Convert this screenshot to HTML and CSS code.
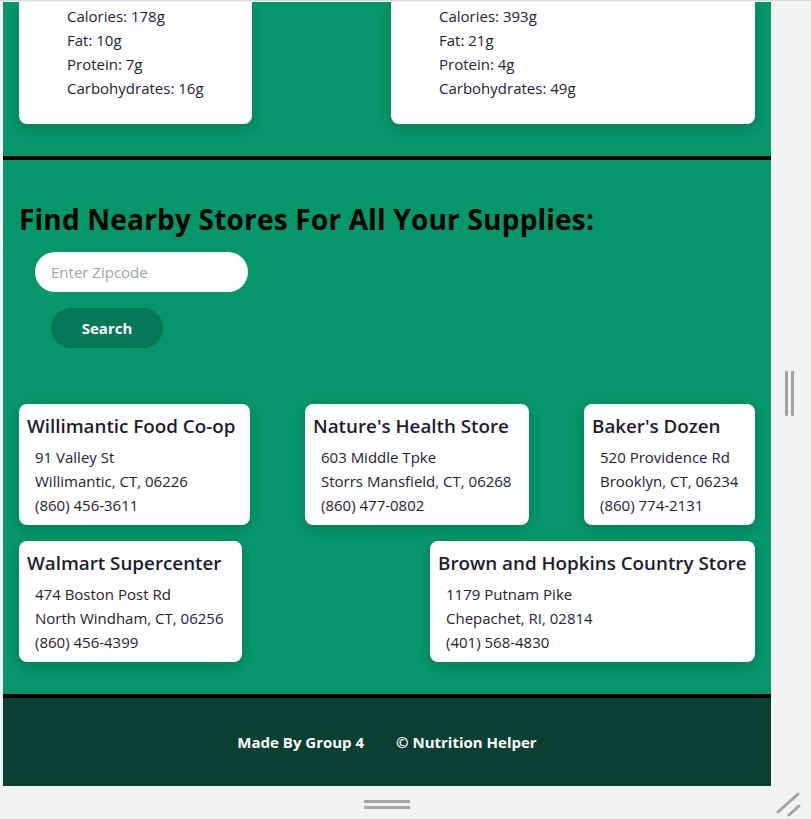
FILE: index.html
```html
<!DOCTYPE html>
<html lang="en">
<head>
<meta charset="utf-8">
<title>Nutrition Helper</title>
<link rel="stylesheet" href="styles.css">
</head>
<body>
<div class="window">
  <div class="viewport">
    <section class="foods">
      <div class="food-card food-card--a">
        <ul class="facts">
          <li>Calories: 178g</li>
          <li>Fat: 10g</li>
          <li>Protein: 7g</li>
          <li>Carbohydrates: 16g</li>
        </ul>
      </div>
      <div class="food-card food-card--b">
        <ul class="facts">
          <li>Calories: 393g</li>
          <li>Fat: 21g</li>
          <li>Protein: 4g</li>
          <li>Carbohydrates: 49g</li>
        </ul>
      </div>
    </section>

    <section class="stores">
      <h2 class="stores-title">Find Nearby Stores For All Your Supplies:</h2>
      <input class="zip" type="text" placeholder="Enter Zipcode">
      <button class="search-btn">Search</button>

      <div class="store-list">
        <div class="store store--1">
          <h3 class="store-name">Willimantic Food Co-op</h3>
          <p class="store-line">91 Valley St</p>
          <p class="store-line">Willimantic, CT, 06226</p>
          <p class="store-line">(860) 456-3611</p>
        </div>
        <div class="store store--2">
          <h3 class="store-name">Nature's Health Store</h3>
          <p class="store-line">603 Middle Tpke</p>
          <p class="store-line">Storrs Mansfield, CT, 06268</p>
          <p class="store-line">(860) 477-0802</p>
        </div>
        <div class="store store--3">
          <h3 class="store-name">Baker's Dozen</h3>
          <p class="store-line">520 Providence Rd</p>
          <p class="store-line">Brooklyn, CT, 06234</p>
          <p class="store-line">(860) 774-2131</p>
        </div>
        <div class="store store--4">
          <h3 class="store-name">Walmart Supercenter</h3>
          <p class="store-line">474 Boston Post Rd</p>
          <p class="store-line">North Windham, CT, 06256</p>
          <p class="store-line">(860) 456-4399</p>
        </div>
        <div class="store store--5">
          <h3 class="store-name">Brown and Hopkins Country Store</h3>
          <p class="store-line">1179 Putnam Pike</p>
          <p class="store-line">Chepachet, RI, 02814</p>
          <p class="store-line">(401) 568-4830</p>
        </div>
      </div>
    </section>

    <footer class="footer">
      <span>Made By Group 4</span>
      <span>© Nutrition Helper</span>
    </footer>
  </div>

  <div class="gutter-right">
    <span class="vbar"></span><span class="vbar"></span>
  </div>
  <div class="gutter-bottom">
    <span class="hbar"></span><span class="hbar"></span>
  </div>
  <div class="corner">
    <svg width="40" height="33" viewBox="0 0 40 33">
      <line x1="7" y1="26" x2="27" y2="8" stroke="#a3a3a3" stroke-width="3" stroke-linecap="round"/>
      <line x1="18" y1="29" x2="28" y2="20" stroke="#a3a3a3" stroke-width="3" stroke-linecap="round"/>
    </svg>
  </div>
</div>
</body>
</html>
```

FILE: styles.css
```css
* { box-sizing: border-box; }

html, body {
  margin: 0;
  padding: 0;
}

body {
  width: 811px;
  height: 819px;
  overflow: hidden;
  background: #f2f3f5;
  font-family: "Open Sans", "Noto Sans", sans-serif;
}

.window {
  display: grid;
  grid-template-columns: 3px 768px 40px;
  grid-template-rows: 1px 784px 33px;
  width: 811px;
  height: 819px;
  border-top: 1px solid #d9d9d9;
  background: #f2f3f5;
}

.viewport {
  grid-column: 2;
  grid-row: 2;
  overflow: hidden;
  background: #059669;
  display: flex;
  flex-direction: column;
}

/* Food cards (scrolled, top cut off) */
.foods {
  display: flex;
  justify-content: space-between;
  padding: 0 16px 32px;
}

.food-card {
  background: #fff;
  border-radius: 0 0 8px 8px;
  box-shadow: 0 4px 12px rgba(0, 0, 0, 0.18);
  padding: 2px 8px 24px;
}
.food-card--a { width: 233px; }
.food-card--b { width: 364px; }

.facts {
  list-style: none;
  margin: 0;
  padding: 0 0 0 40px;
  font-size: 15px;
  line-height: 24px;
  color: #1f2233;
}

/* Stores */
.stores {
  border-top: 4px solid #000;
  padding: 0 16px 32px;
  display: flex;
  flex-direction: column;
  align-items: flex-start;
}

.stores-title {
  margin: 41px 0 15px;
  font-size: 28px;
  line-height: 36px;
  letter-spacing: 0.2px;
  font-weight: 700;
  color: #000;
}

.zip {
  margin-left: 16px;
  width: 213px;
  height: 40px;
  border: none;
  border-radius: 20px;
  padding: 0 16px;
  font-family: inherit;
  font-size: 15px;
  color: #111;
  background: #fff;
  outline: none;
}
.zip::placeholder { color: #9ca3af; }

.search-btn {
  margin: 16px 0 0 32px;
  width: 112px;
  height: 40px;
  border: none;
  border-radius: 20px;
  background: #047857;
  color: #fff;
  font-family: inherit;
  font-size: 15px;
  font-weight: 700;
}

.store-list {
  margin-top: 56px;
  width: 100%;
  display: flex;
  flex-wrap: wrap;
  justify-content: space-between;
  row-gap: 16px;
}

.store {
  background: #fff;
  border-radius: 8px;
  box-shadow: 0 4px 12px rgba(0, 0, 0, 0.18);
  padding: 8px;
  white-space: nowrap;
  height: 121px;
}
.store--1 { width: 231px; }
.store--2 { width: 224px; }
.store--3 { width: 171px; }
.store--4 { width: 223px; }
.store--5 { width: 325px; }

.store-name {
  margin: 0 0 5px;
  font-size: 18.8px;
  line-height: 28px;
  font-weight: 600;
  color: #1e1d2d;
}

.store-line {
  margin: 0;
  padding-left: 8px;
  font-size: 15px;
  line-height: 24px;
  color: #1f2233;
}

/* Footer */
.footer {
  border-top: 4px solid #000;
  flex: 1;
  background: #0a3f32;
  color: #fff;
  display: flex;
  justify-content: center;
  align-items: center;
  gap: 32px;
  font-size: 15px;
  font-weight: 700;
}

/* Frame gutters */
.gutter-right {
  grid-column: 3;
  grid-row: 1 / 3;
  display: flex;
  justify-content: center;
  align-items: center;
  gap: 3px;
  padding-right: 4px;
}
.vbar {
  width: 3px;
  height: 45px;
  background: #a3a3a3;
  border-radius: 1px;
}

.gutter-bottom {
  grid-column: 2;
  grid-row: 3;
  display: flex;
  flex-direction: column;
  justify-content: center;
  align-items: center;
  gap: 3px;
  padding-top: 4px;
}
.hbar {
  width: 46px;
  height: 3px;
  background: #a3a3a3;
  border-radius: 1px;
}

.corner {
  grid-column: 3;
  grid-row: 3;
}
.corner svg { display: block; }
```
